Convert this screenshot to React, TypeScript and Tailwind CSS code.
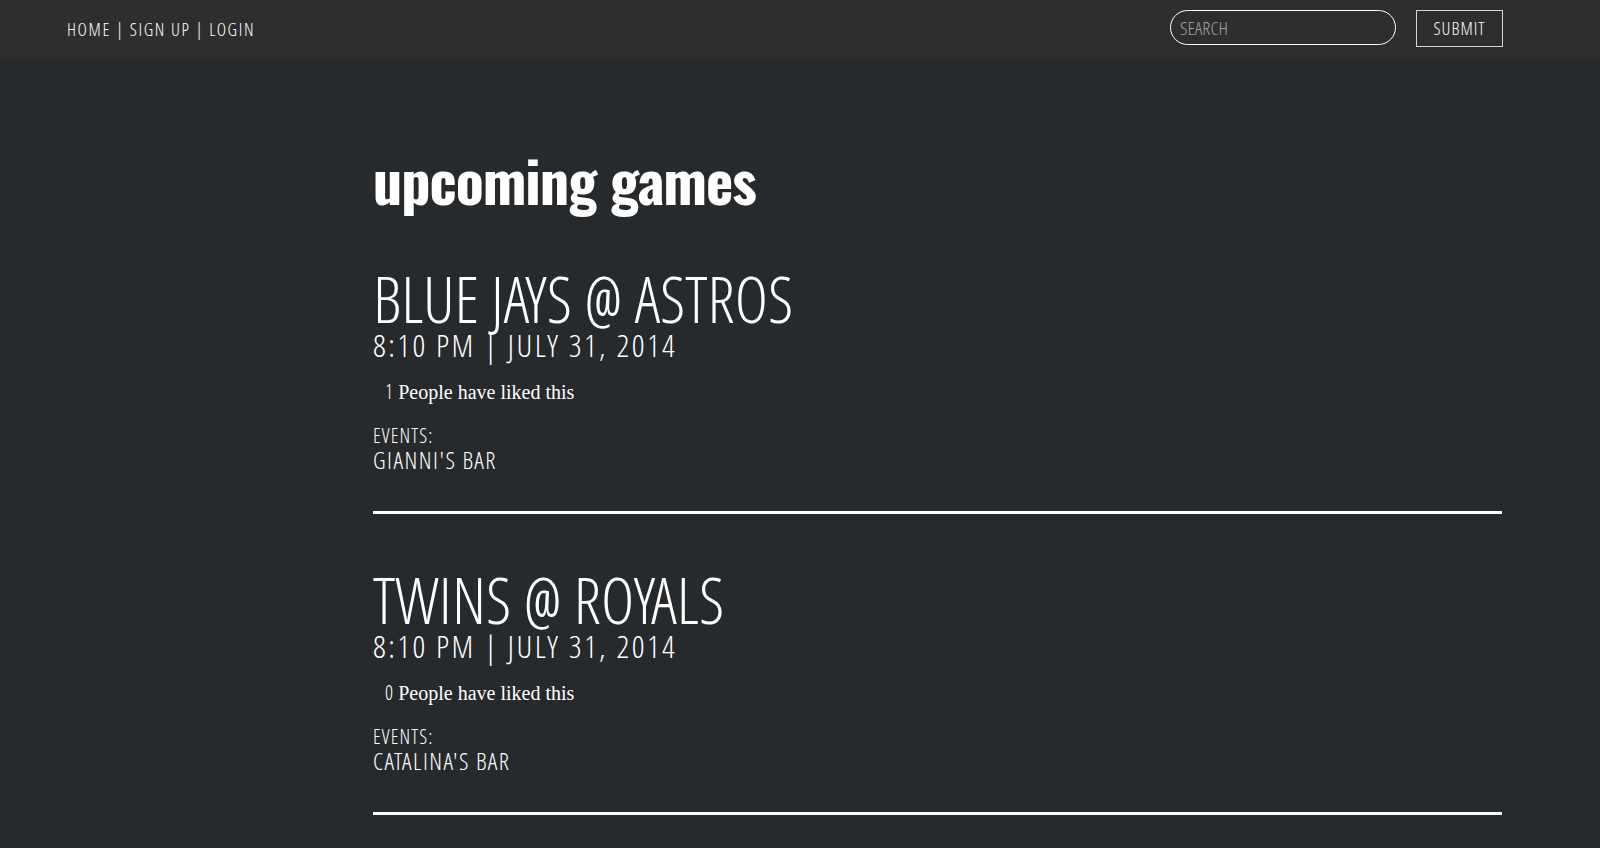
const games = [
  { title: "BLUE JAYS @ ASTROS", time: "8:10 PM | JULY 31, 2014", likes: 1, bar: "GIANNI'S BAR" },
  { title: "TWINS @ ROYALS", time: "8:10 PM | JULY 31, 2014", likes: 0, bar: "CATALINA'S BAR" },
];

const thin = "font-['Open_Sans_Condensed_Light','Open_Sans',sans-serif] font-light font-stretch-condensed";

export default function App() {
  return (
    <div className="min-h-screen bg-[#272a2d] text-white">
      <header className="flex h-[59px] items-start justify-between bg-[#2f2e2e] pl-[67px] pr-[97px] pt-[10px]">
        <nav className={`${thin} mt-[7px] text-[18px] leading-[24px] tracking-[1.6px] text-white`}>
          HOME | SIGN UP | LOGIN
        </nav>
        <div className="flex items-start gap-[20px]">
          <input
            placeholder="SEARCH"
            className={`${thin} h-[35px] w-[226px] rounded-full border-[1.5px] border-white bg-transparent px-[9px] text-[19px] text-white outline-none placeholder:text-[#a3a3a3]`}
          />
          <button className={`${thin} h-[37px] w-[87px] border-[1.5px] border-[#d6d6d6] text-[18px] tracking-[1px] text-white`}>
            SUBMIT
          </button>
        </div>
      </header>

      <main className="ml-[373px] mr-[98px] pt-[80px]">
        <h1 className="font-['Oswald','Liberation_Sans_Narrow','Roboto',sans-serif] text-[58px] font-bold leading-[80px] tracking-[-1px] font-stretch-condensed">
          upcoming games
        </h1>
        {games.map((g) => (
          <section key={g.title} className="mt-[54px] first-of-type:mt-[48px]">
            <h2 className={`${thin} text-[64px] leading-[64px]`}>{g.title}</h2>
            <p className={`${thin} text-[32px] leading-[28px] tracking-[2.4px]`}>{g.time}</p>
            <p className="mt-[21px] pl-[12px] text-[20px] leading-[24px]">
              <span className={thin}>{g.likes}</span>{" "}
              <span className="font-['Liberation_Serif',serif]">People have liked this</span>
            </p>
            <div className={`${thin} mt-[21px] text-[20px] leading-[22px] tracking-[1.1px]`}>EVENTS:</div>
            <div className={`${thin} text-[24px] leading-[26px] tracking-[1.5px]`}>{g.bar}</div>
            <hr className="mt-[38px] border-t-[3px] border-white" />
          </section>
        ))}
      </main>
    </div>
  );
}
